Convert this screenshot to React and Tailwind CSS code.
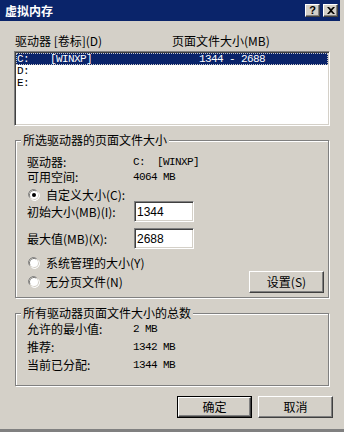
import React from 'react';

const cjk = { fontFamily: '"Noto Sans CJK SC", "Liberation Sans", sans-serif' };
const mono = { fontFamily: '"Liberation Mono", "Noto Sans CJK SC", monospace' };

// classic 3D borders
const raised =
  'border border-t-white border-l-white border-r-[#404040] border-b-[#404040] shadow-[inset_-1px_-1px_0_#808080]';
const sunken =
  'border border-t-[#808080] border-l-[#808080] border-r-white border-b-white shadow-[inset_1px_1px_0_#404040,inset_-1px_-1px_0_#d4d0c8]';

const Radio = ({ checked }) => (
  <svg width="12" height="12" viewBox="0 0 12 12" className="shrink-0">
    <path d="M1.5 8.5 A5 5 0 0 1 8.5 1.5" fill="none" stroke="#808080" />
    <path d="M2.5 8 A4 4 0 0 1 8 2.5" fill="none" stroke="#404040" />
    <circle cx="6" cy="6" r="4" fill="white" />
    <path d="M10.5 3.5 A5 5 0 0 1 3.5 10.5" fill="none" stroke="white" />
    {checked && <circle cx="6" cy="6" r="2" fill="black" />}
  </svg>
);

const RadioRow = ({ checked, children, className = '' }) => (
  <div className={`flex items-center gap-[6px] ${className}`}>
    <Radio checked={checked} />
    <span className="text-[12px] leading-[12px]">{children}</span>
  </div>
);

const Button = ({ children, def, className = '' }) => (
  <div className={`${def ? 'border border-black' : ''} ${className}`}>
    <div className={`${raised} w-full h-full flex items-center justify-center text-[12px] leading-[12px] bg-[#d4d0c8]`}>
      {children}
    </div>
  </div>
);

const GroupBox = ({ title, className = '', children }) => (
  <div
    className={`relative border border-[#808080] shadow-[inset_1px_1px_0_white,1px_1px_0_white] ${className}`}
  >
    <span className="absolute left-[5px] top-[-7px] px-[2px] bg-[#d4d0c8] text-[12px] leading-[12px]">
      {title}
    </span>
    {children}
  </div>
);

const InfoRow = ({ label, value, h = 'h-[15px]' }) => (
  <div className={`flex items-center ${h}`}>
    <span className="w-[106px] text-[12px] leading-[12px]">{label}</span>
    <span className="text-[11px] leading-[12px] tracking-[-0.6px] whitespace-pre" style={mono}>
      {value}
    </span>
  </div>
);

const drives = [
  { d: 'C:', label: '[WINXP]', size: '1344 - 2688', sel: true },
  { d: 'D:', label: '', size: '' },
  { d: 'E:', label: '', size: '' },
];

export default function App() {
  return (
    <div className="w-[344px] h-[432px] bg-[#d4d0c8] flex flex-col overflow-hidden text-black" style={cjk}>
      {/* title bar */}
      <div className="w-[340px] h-[21px] shrink-0 bg-[#0a246a] flex items-center justify-between pl-[5px] pr-[2px]">
        <span className="text-white font-bold text-[12px] leading-[12px]">虚拟内存</span>
        <div className="flex gap-[3px]">
          <div className={`${raised} w-[15px] h-[13px] bg-[#d4d0c8] flex items-center justify-center`}>
            <span className="text-[11px] font-bold leading-[11px]" style={{ fontFamily: '"Liberation Sans", sans-serif' }}>
              ?
            </span>
          </div>
          <div className={`${raised} w-[15px] h-[13px] bg-[#d4d0c8] flex items-center justify-center`}>
            <svg width="8" height="7" viewBox="0 0 8 7">
              <path d="M0 0 L2 0 L4 2 L6 0 L8 0 L5 3.5 L8 7 L6 7 L4 5 L2 7 L0 7 L3 3.5 Z" fill="black" />
            </svg>
          </div>
        </div>
      </div>

      <div className="pl-[15px] flex flex-col">
        {/* list header */}
        <div className="mt-[14px] h-[12px] flex text-[12px] leading-[12px]">
          <span className="w-[157px]">驱动器 [卷标](D)</span>
          <span>页面文件大小(MB)</span>
        </div>

        {/* drive list */}
        <div className={`${sunken} mt-[4px] ml-[-1px] w-[316px] h-[75px] bg-white p-[1px]`}>
          {drives.map((r) => (
            <div
              key={r.d}
              className={`h-[12px] flex items-center pl-[1px] text-[11px] leading-[12px] tracking-[-0.6px] whitespace-pre ${
                r.sel ? 'bg-[#0a246a] text-white outline outline-1 outline-dotted outline-offset-[-1px] outline-[#c8c8c8]' : ''
              }`}
              style={mono}
            >
              <span className="w-[33px]">{r.d}</span>
              <span className="w-[149px]">{r.label}</span>
              <span>{r.size}</span>
            </div>
          ))}
        </div>

        {/* selected drive */}
        <GroupBox title="所选驱动器的页面文件大小" className="mt-[14px] w-[314px] h-[158px]">
          <div className="pt-[13px] pl-[11px] pr-[4px] flex flex-col">
            <InfoRow label="驱动器:" value="C:  [WINXP]" />
            <InfoRow label="可用空间:" value="4064 MB" />
            <RadioRow checked className="mt-[5px] h-[12px] pl-[1px]">
              自定义大小(C):
            </RadioRow>
            <div className="flex items-center h-[21px]">
              <span className="w-[107px] text-[12px] leading-[12px]">初始大小(MB)(I):</span>
              <div className={`${sunken} w-[60px] h-[21px] bg-white flex items-center pl-[2px] text-[12px] leading-[12px]`} style={{ fontFamily: '"Liberation Sans", sans-serif' }}>
                1344
              </div>
            </div>
            <div className="flex items-center h-[21px] mt-[6px]">
              <span className="w-[107px] text-[12px] leading-[12px]">最大值(MB)(X):</span>
              <div className={`${sunken} w-[60px] h-[21px] bg-white flex items-center pl-[2px] text-[12px] leading-[12px]`} style={{ fontFamily: '"Liberation Sans", sans-serif' }}>
                2688
              </div>
            </div>
            <RadioRow className="mt-[8px] h-[12px] pl-[1px]">系统管理的大小(Y)</RadioRow>
            <div className="mt-[2px] h-[22px] flex items-center justify-between">
              <RadioRow className="pl-[1px]">无分页文件(N)</RadioRow>
              <Button className="w-[75px] h-[22px]">设置(S)</Button>
            </div>
          </div>
        </GroupBox>

        {/* totals */}
        <GroupBox title="所有驱动器页面文件大小的总数" className="mt-[15px] w-[314px] h-[73px]">
          <div className="pt-[6px] pl-[11px] flex flex-col">
            <InfoRow label="允许的最小值:" value="2 MB" h="h-[18px]" />
            <InfoRow label="推荐:" value="1342 MB" h="h-[18px]" />
            <InfoRow label="当前已分配:" value="1344 MB" h="h-[18px]" />
          </div>
        </GroupBox>

        {/* dialog buttons */}
        <div className="mt-[10px] ml-[162px] flex gap-[6px]">
          <Button def className="w-[75px] h-[22px]">确定</Button>
          <Button className="w-[75px] h-[22px]">取消</Button>
        </div>
      </div>

      <div className="mt-auto h-[3px] bg-[#808080] shrink-0" />
    </div>
  );
}
